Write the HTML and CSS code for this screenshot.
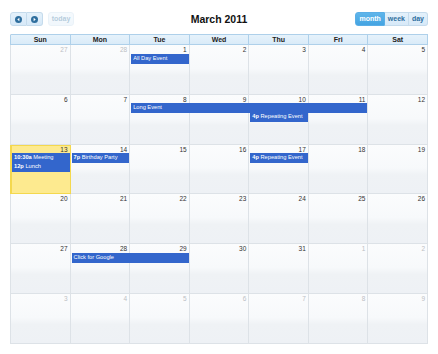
FILE: index.html
```html
<!DOCTYPE html>
<html lang="en">
  <head>
    <meta charset="UTF-8" />
    <meta name="viewport" content="width=device-width, initial-scale=1.0" />
    <title>Calendar</title>
    <link rel="stylesheet" href="styles.css">
  </head>
  <body>
    <div id="calendar">
      <div class="toolbar">
        <div class="tb-left">
          <span class="btn-group">
            <button class="btn btn-icon first">
              <svg width="7" height="7" viewBox="0 0 8 8"><circle cx="4" cy="4" r="4" fill="#2e6e9e"/><path d="M5 2 L2.6 4 L5 6 Z" fill="#fff"/></svg>
            </button>
            <button class="btn btn-icon last">
              <svg width="7" height="7" viewBox="0 0 8 8"><circle cx="4" cy="4" r="4" fill="#2e6e9e"/><path d="M3 2 L5.4 4 L3 6 Z" fill="#fff"/></svg>
            </button>
          </span>
          <button class="btn today-btn">today</button>
        </div>
        <h2 class="title">March 2011</h2>
        <div class="tb-right btn-group">
          <button class="btn first active">month</button>
          <button class="btn">week</button>
          <button class="btn last">day</button>
        </div>
      </div>

      <div class="month">
        <div class="head">
          <div>Sun</div><div>Mon</div><div>Tue</div><div>Wed</div><div>Thu</div><div>Fri</div><div>Sat</div>
        </div>

        <div class="week">
          <div class="cell other">27</div>
          <div class="cell other">28</div>
          <div class="cell">1</div>
          <div class="cell">2</div>
          <div class="cell">3</div>
          <div class="cell">4</div>
          <div class="cell">5</div>
          <div class="event" style="grid-column: 3 / 4; grid-row: 2">All Day Event</div>
        </div>

        <div class="week">
          <div class="cell">6</div>
          <div class="cell">7</div>
          <div class="cell">8</div>
          <div class="cell">9</div>
          <div class="cell">10</div>
          <div class="cell">11</div>
          <div class="cell">12</div>
          <div class="event" style="grid-column: 3 / 7; grid-row: 2">Long Event</div>
          <div class="event" style="grid-column: 5 / 6; grid-row: 3"><b>4p</b> Repeating Event</div>
        </div>

        <div class="week">
          <div class="cell today">13</div>
          <div class="cell">14</div>
          <div class="cell">15</div>
          <div class="cell">16</div>
          <div class="cell">17</div>
          <div class="cell">18</div>
          <div class="cell">19</div>
          <div class="event" style="grid-column: 1 / 2; grid-row: 2"><b>10:30a</b> Meeting</div>
          <div class="event" style="grid-column: 1 / 2; grid-row: 3"><b>12p</b> Lunch</div>
          <div class="event" style="grid-column: 2 / 3; grid-row: 2"><b>7p</b> Birthday Party</div>
          <div class="event" style="grid-column: 5 / 6; grid-row: 2"><b>4p</b> Repeating Event</div>
        </div>

        <div class="week">
          <div class="cell">20</div>
          <div class="cell">21</div>
          <div class="cell">22</div>
          <div class="cell">23</div>
          <div class="cell">24</div>
          <div class="cell">25</div>
          <div class="cell">26</div>
        </div>

        <div class="week">
          <div class="cell">27</div>
          <div class="cell">28</div>
          <div class="cell">29</div>
          <div class="cell">30</div>
          <div class="cell">31</div>
          <div class="cell other">1</div>
          <div class="cell other">2</div>
          <div class="event" style="grid-column: 2 / 4; grid-row: 2">Click for Google</div>
        </div>

        <div class="week">
          <div class="cell other">3</div>
          <div class="cell other">4</div>
          <div class="cell other">5</div>
          <div class="cell other">6</div>
          <div class="cell other">7</div>
          <div class="cell other">8</div>
          <div class="cell other">9</div>
        </div>
      </div>
    </div>
  </body>
</html>
```

FILE: styles.css
```css
body {
  font-family: "Liberation Sans", Arial, sans-serif;
  margin: 0;
  background-color: #fff;
  color: #222;
}

#calendar {
  padding: 12px 10px 0 10px;
}

/* toolbar */
.toolbar {
  display: grid;
  grid-template-columns: 1fr auto 1fr;
  align-items: center;
  height: 14px;
  margin-bottom: 8px;
}

.tb-left {
  display: flex;
  gap: 5px;
}

.tb-right {
  justify-self: end;
}

.title {
  margin: 0;
  font-size: 10.5px;
  font-weight: bold;
  color: #111;
}

.btn-group {
  display: flex;
}

.btn {
  height: 14px;
  padding: 0 3px;
  font-family: inherit;
  font-size: 7px;
  font-weight: bold;
  color: #2e6e9e;
  background: linear-gradient(#e4f1fb, #d7e9f8);
  border: 1px solid #c5dbec;
  border-radius: 3px;
  line-height: 12px;
}

.btn-group .btn {
  border-radius: 0;
}

.btn-group .btn + .btn {
  border-left: none;
}

.btn-group .first {
  border-radius: 3px 0 0 3px;
}

.btn-group .last {
  border-radius: 0 3px 3px 0;
}

.btn-icon {
  width: 16.5px;
  padding: 0;
  display: flex;
  align-items: center;
  justify-content: center;
}

.today-btn {
  width: 26px;
  padding: 0;
  opacity: 0.35;
}

.btn.active {
  background: linear-gradient(#5fb5ea, #44a4e2);
  border-color: #5aaee6;
  color: #fff;
}

/* month grid */
.month {
  border-left: 1px solid #dde2e7;
}

.head {
  display: grid;
  grid-template-columns: repeat(7, 1fr);
  height: 10px;
  background: linear-gradient(#e6f2fb, #d8eaf8);
  border-top: 1px solid #aed0ea;
}

.head div {
  font-size: 7px;
  font-weight: bold;
  line-height: 9px;
  text-align: center;
  border-right: 1px solid #aed0ea;
  border-bottom: 1px solid #aed0ea;
}

.head div:first-child {
  box-shadow: -1px 0 0 #aed0ea;
}

.week {
  display: grid;
  grid-template-columns: repeat(7, 1fr);
  grid-template-rows: 8.7px 9px 9px 1fr;
  height: 49.8px;
}

.cell {
  grid-row: 1 / -1;
  font-size: 6.5px;
  line-height: 8px;
  text-align: right;
  padding: 1px 2px 0 0;
  color: #333;
  border-right: 1px solid #dde2e7;
  border-bottom: 1px solid #dde2e7;
  background: linear-gradient(#fbfcfd 0%, #f7f9fb 48%, #eff2f5 62%, #eef1f5 100%);
}

.cell:nth-child(1) { grid-column: 1; }
.cell:nth-child(2) { grid-column: 2; }
.cell:nth-child(3) { grid-column: 3; }
.cell:nth-child(4) { grid-column: 4; }
.cell:nth-child(5) { grid-column: 5; }
.cell:nth-child(6) { grid-column: 6; }
.cell:nth-child(7) { grid-column: 7; }

.cell.other {
  color: #bcc0c4;
}

.cell.today {
  background: #fdea8f;
  border-color: #f4d84e;
  box-shadow: inset 1px 1px 0 #f4d84e, -1px 0 0 #f4d84e;
}

.event {
  height: 8px;
  margin: 0 1px 1px 1px;
  padding: 0 1px;
  font-size: 5.7px;
  line-height: 6px;
  color: #fff;
  background-color: #3366cc;
  border: 1px solid #3366cc;
  white-space: nowrap;
  overflow: hidden;
}
```
